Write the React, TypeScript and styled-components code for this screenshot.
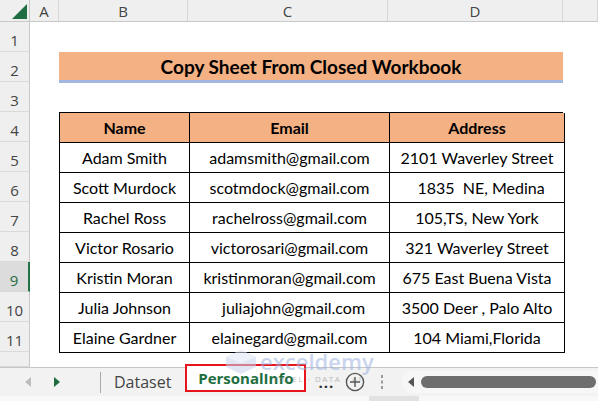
import styled, { createGlobalStyle } from "styled-components";

const COLS = "30px 29px 129px 200px 175px 1fr";

const GlobalStyle = createGlobalStyle`
  html, body {
    margin: 0;
    padding: 0;
    background: #ffffff;
  }
  * {
    box-sizing: border-box;
  }
`;

const Frame = styled.div`
  position: relative;
  width: 598px;
  height: 401px;
  display: flex;
  flex-direction: column;
  overflow: hidden;
  background: #ffffff;
  font-family: "Open Sans", "Noto Sans", sans-serif;
`;

const ColumnHeaders = styled.div`
  display: grid;
  grid-template-columns: ${COLS};
  height: 22px;
  background: #efefef;
  border-bottom: 1px solid #c8c8c8;
`;

const ColumnLabel = styled.div`
  display: flex;
  align-items: center;
  justify-content: center;
  border-right: 1px solid #d6d6d6;
  color: #444;
  font-size: 15px;
`;

const Corner = styled.div`
  display: flex;
  align-items: flex-start;
  justify-content: flex-start;
  padding: 4px 0 0 12px;
  border-right: 1px solid #c8c8c8;
`;

const Sheet = styled.div`
  flex: 1;
  display: grid;
  grid-template-columns: ${COLS};
  grid-template-rows: repeat(11, 30px) 1fr;
  min-height: 0;
`;

const RowLabel = styled.div<{ $row: number; $active?: boolean }>`
  grid-column: 1;
  grid-row: ${({ $row }) => $row};
  display: flex;
  align-items: flex-end;
  justify-content: center;
  padding-bottom: 3px;
  background: ${({ $active }) => ($active ? "#dcdcdc" : "#efefef")};
  border-bottom: 1px solid #d9d9d9;
  border-right: ${({ $active }) =>
    $active ? "2px solid #217346" : "1px solid #c8c8c8"};
  color: ${({ $active }) => ($active ? "#1e6b41" : "#444")};
  font-size: 15px;
  line-height: 1;
`;

const Title = styled.div`
  grid-column: 3 / 6;
  grid-row: 2;
  height: 31px;
  display: flex;
  align-items: center;
  justify-content: center;
  background: #f4b183;
  border-bottom: 3px solid #a3b6e0;
  font-family: Lato, "Open Sans", sans-serif;
  font-weight: 700;
  font-size: 19px;
  color: #000;
`;

const DataTable = styled.div`
  grid-column: 3 / 6;
  grid-row: 4 / 12;
  display: grid;
  grid-template-columns: 130px 200px 175px;
  grid-auto-rows: 30px;
  align-self: start;
  border-top: 1px solid #000;
  border-left: 1px solid #000;
  font-family: Lato, "Open Sans", sans-serif;
  font-size: 16px;
  color: #000;
`;

const Cell = styled.div<{ $head?: boolean }>`
  display: flex;
  align-items: center;
  justify-content: center;
  white-space: pre;
  border-right: 1px solid #000;
  border-bottom: 1px solid #000;
  background: ${({ $head }) => ($head ? "#f4b183" : "#ffffff")};
  font-weight: ${({ $head }) => ($head ? 700 : 400)};
`;

const TabBar = styled.div`
  height: 29px;
  display: flex;
  align-items: center;
  background: #f2f2f2;
  border-top: 1px solid #c6c6c6;
`;

const NavArrows = styled.div`
  width: 100px;
  display: flex;
  align-items: center;
  gap: 23px;
  padding-left: 25px;
`;

const Arrow = styled.span<{ $dir: "left" | "right"; $color: string }>`
  width: 0;
  height: 0;
  border-top: 5px solid transparent;
  border-bottom: 5px solid transparent;
  ${({ $dir, $color }) =>
    $dir === "left"
      ? `border-right: 6px solid ${$color};`
      : `border-left: 6px solid ${$color};`}
`;

const Divider = styled.span`
  width: 1px;
  height: 21px;
  background: #a8a8a8;
`;

const Tab = styled.div`
  padding: 0 14px 0 13px;
  font-size: 16px;
  color: #444;
`;

const ActiveTab = styled.div`
  align-self: flex-start;
  margin-top: -4px;
  height: 28px;
  width: 121px;
  display: flex;
  align-items: center;
  justify-content: center;
  background: #ffffff;
  border: 2px solid #e8141b;
  color: #1d6e40;
  font-size: 15px;
  font-weight: 700;
`;

const Overflow = styled.span`
  margin-left: 12px;
  width: 22px;
  color: #2b2b2b;
  font-size: 15px;
  font-weight: 700;
  letter-spacing: 1px;
`;

const IconSlot = styled.span<{ $width: number }>`
  width: ${({ $width }) => $width}px;
  display: flex;
  align-items: center;
  justify-content: center;
`;

const ScrollTrack = styled.div`
  flex: 1;
  height: 22px;
  margin-left: 8px;
  display: flex;
  align-items: center;
  gap: 7px;
  padding-left: 6px;
  background: #f7f7f7;
  border-radius: 11px 0 0 11px;
`;

const Thumb = styled.div`
  flex: 1;
  height: 12px;
  border-radius: 6px;
  background: #6e6e6e;
  margin-right: 2px;
`;

const BottomStrip = styled.div`
  height: 5px;
  display: flex;
  background: #f8f8f8;
`;

const StripSegment = styled.span`
  margin-left: 369px;
  width: 50px;
  background: #e2e2e2;
`;

const Watermark = styled.div`
  position: absolute;
  left: 226px;
  top: 350px;
  display: flex;
  align-items: flex-start;
  gap: 4px;
  opacity: 0.55;
  pointer-events: none;
`;

const WatermarkText = styled.div`
  display: flex;
  flex-direction: column;
  line-height: 1;
`;

const Brand = styled.span`
  font-family: "Open Sans", sans-serif;
  font-size: 22px;
  font-weight: 600;
  color: #9fb3df;
`;

const Tagline = styled.span`
  margin-top: 3px;
  padding-left: 14px;
  font-size: 8px;
  letter-spacing: 1.5px;
  color: #8a8a8a;
`;

const rows = [
  ["Adam Smith", "adamsmith@gmail.com", "2101 Waverley Street"],
  ["Scott Murdock", "scotmdock@gmail.com", "  1835  NE, Medina"],
  ["Rachel Ross", "rachelross@gmail.com", "105,TS, New York"],
  ["Victor Rosario", "victorosari@gmail.com", "321 Waverley Street"],
  ["Kristin Moran", "kristinmoran@gmail.com", "675 East Buena Vista"],
  ["Julia Johnson", "  juliajohn@gmail.com", "3500 Deer , Palo Alto"],
  ["Elaine Gardner", "elainegard@gmail.com", "104 Miami,Florida"],
];

const App = () => {
  return (
    <Frame>
      <GlobalStyle />
      <ColumnHeaders>
        <Corner>
          <svg width="15" height="15" viewBox="0 0 15 15">
            <polygon points="15,0 15,15 0,15" fill="#1f6e43" />
          </svg>
        </Corner>
        <ColumnLabel>A</ColumnLabel>
        <ColumnLabel>B</ColumnLabel>
        <ColumnLabel>C</ColumnLabel>
        <ColumnLabel>D</ColumnLabel>
        <ColumnLabel />
      </ColumnHeaders>

      <Sheet>
        {Array.from({ length: 12 }, (_, i) => (
          <RowLabel key={i} $row={i + 1} $active={i + 1 === 9}>
            {i < 11 ? i + 1 : ""}
          </RowLabel>
        ))}
        <Title>Copy Sheet From Closed Workbook</Title>
        <DataTable>
          <Cell $head>Name</Cell>
          <Cell $head>Email</Cell>
          <Cell $head>Address</Cell>
          {rows.map((row) =>
            row.map((value, j) => <Cell key={row[0] + j}>{value}</Cell>)
          )}
        </DataTable>
      </Sheet>

      <TabBar>
        <NavArrows>
          <Arrow $dir="left" $color="#bdbdbd" />
          <Arrow $dir="right" $color="#1d6b3e" />
        </NavArrows>
        <Divider />
        <Tab>Dataset</Tab>
        <ActiveTab>PersonalInfo</ActiveTab>
        <Overflow>...</Overflow>
        <IconSlot $width={30}>
          <svg width="20" height="20" viewBox="0 0 20 20">
            <circle cx="10" cy="10" r="8.6" fill="none" stroke="#555" strokeWidth="1.4" />
            <path d="M10 5v10M5 10h10" stroke="#555" strokeWidth="1.4" />
          </svg>
        </IconSlot>
        <IconSlot $width={24}>
          <svg width="4" height="16" viewBox="0 0 4 16">
            <rect x="1" y="1" width="2" height="3" fill="#9a9a9a" />
            <rect x="1" y="6.5" width="2" height="3" fill="#9a9a9a" />
            <rect x="1" y="12" width="2" height="3" fill="#9a9a9a" />
          </svg>
        </IconSlot>
        <ScrollTrack>
          <Arrow $dir="left" $color="#555" />
          <Thumb />
        </ScrollTrack>
      </TabBar>
      <BottomStrip>
        <StripSegment />
      </BottomStrip>

      <Watermark>
        <svg width="30" height="24" viewBox="0 0 30 24">
          <polygon points="15,0 30,7 30,17 15,24 0,17 0,7" fill="#c7d2ec" />
          <polygon points="15,0 30,7 15,13 0,7" fill="#dfe6f5" />
        </svg>
        <WatermarkText>
          <Brand>exceldemy</Brand>
          <Tagline>EXCEL · DATA · AI</Tagline>
        </WatermarkText>
      </Watermark>
    </Frame>
  );
};

export default App;
